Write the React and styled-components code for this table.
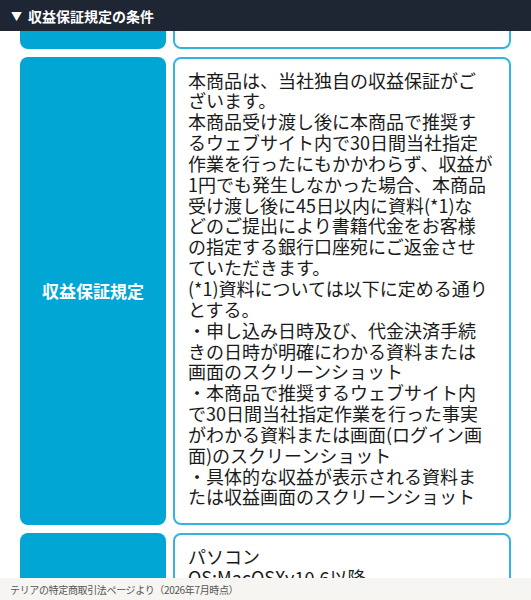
import { useLayoutEffect, useRef } from "react";
import styled, { createGlobalStyle } from "styled-components";

const GlobalStyle = createGlobalStyle`
  html, body {
    margin: 0;
    padding: 0;
    background: #ffffff;
  }
  body {
    font-family: "Noto Sans CJK JP", "Noto Sans", sans-serif;
    color: #222222;
  }
`;

const Screen = styled.div`
  position: relative;
  display: flex;
  flex-direction: column;
  width: 100%;
  height: 100vh;
  overflow: hidden;
  background: #ffffff;
`;

const Header = styled.div`
  flex: 0 0 31px;
  display: flex;
  align-items: center;
  gap: 6px;
  padding: 0 10px;
  background: #1f2633;
  color: #ffffff;
  font-size: 14px;
  font-weight: 700;
  line-height: 1;
`;

const Caret = styled.span`
  font-size: 11px;
  margin-left: 1px;
  margin-top: 1px;
`;

const ScrollArea = styled.div`
  flex: 1;
  overflow: hidden;
`;

const Table = styled.div`
  display: grid;
  grid-template-columns: 146px 1fr;
  column-gap: 7px;
  row-gap: 8px;
  padding: 8px 20px 60px;
`;

const Label = styled.div`
  display: flex;
  align-items: center;
  justify-content: center;
  background: #02a6d4;
  border-radius: 8px;
  color: #ffffff;
  font-size: 17px;
  font-weight: 700;
  text-align: center;
`;

const Cell = styled.div`
  border: 2px solid #34b4dc;
  border-radius: 8px;
  padding: 11px 14px 16px 13px;
  font-size: 18px;
  line-height: 20.85px;
  color: #1a1a1a;
  white-space: nowrap;
`;

const Footer = styled.div`
  position: absolute;
  left: 0;
  right: 0;
  bottom: 0;
  height: 22px;
  display: flex;
  align-items: center;
  padding: 0 10px;
  background: #f6f5f1;
  color: #555555;
  font-size: 10px;
  letter-spacing: -0.35px;
`;

const Lines = ({ lines }) =>
  lines.map((line, i) => (
    <span key={i}>
      {line}
      {i < lines.length - 1 && <br />}
    </span>
  ));

const rows = [
  {
    label: "販売価格",
    lines: ["4,980円（税込）", "送料無料", "お支払い方法:クレジットカード"],
  },
  {
    label: "収益保証規定",
    lines: [
      "本商品は、当社独自の収益保証がご",
      "ざいます。",
      "本商品受け渡し後に本商品で推奨す",
      "るウェブサイト内で30日間当社指定",
      "作業を行ったにもかかわらず、収益が",
      "1円でも発生しなかった場合、本商品",
      "受け渡し後に45日以内に資料(*1)な",
      "どのご提出により書籍代金をお客様",
      "の指定する銀行口座宛にご返金させ",
      "ていただきます。",
      "(*1)資料については以下に定める通り",
      "とする。",
      "・申し込み日時及び、代金決済手続",
      "きの日時が明確にわかる資料または",
      "画面のスクリーンショット",
      "・本商品で推奨するウェブサイト内",
      "で30日間当社指定作業を行った事実",
      "がわかる資料または画面(ログイン画",
      "面)のスクリーンショット",
      "・具体的な収益が表示される資料ま",
      "たは収益画面のスクリーンショット",
    ],
  },
  {
    label: "動作環境",
    lines: [
      "パソコン",
      "OS:MacOSXv10.6以降",
      "Windows7以降",
      "ブラウザ:最新版のChrome、",
      "Safari、Firefox、Edge",
      "スマートフォン",
      "iOS12以降",
      "Android8以降",
    ],
  },
];

export default function App() {
  const areaRef = useRef(null);
  const targetRef = useRef(null);

  // the page is scrolled so the guarantee row sits just under the header
  useLayoutEffect(() => {
    const area = areaRef.current;
    const target = targetRef.current;
    if (!area || !target) return;
    const offset =
      target.getBoundingClientRect().top - area.getBoundingClientRect().top;
    area.scrollTop = offset - 26;
  }, []);

  return (
    <>
      <GlobalStyle />
      <Screen>
        <Header>
          <Caret>▼</Caret>
          <span>収益保証規定の条件</span>
        </Header>
        <ScrollArea ref={areaRef}>
          <Table>
            {rows.map((row, i) => (
              <Row key={row.label} row={row} innerRef={i === 1 ? targetRef : null} />
            ))}
          </Table>
        </ScrollArea>
        <Footer>テリアの特定商取引法ページより（2026年7月時点）</Footer>
      </Screen>
    </>
  );
}

function Row({ row, innerRef }) {
  return (
    <>
      <Label ref={innerRef}>{row.label}</Label>
      <Cell>
        <Lines lines={row.lines} />
      </Cell>
    </>
  );
}
